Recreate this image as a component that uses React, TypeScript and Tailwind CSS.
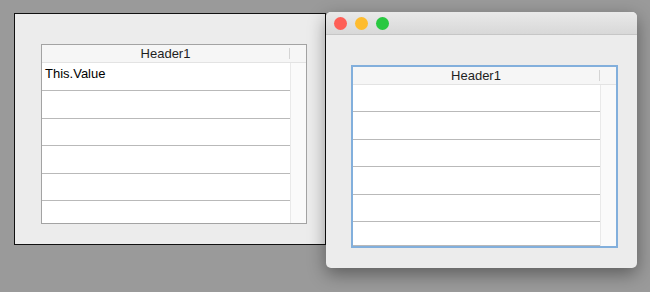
import React from 'react';

interface TableProps {
  rows: string[];
  rowHeights: number[];
  focused?: boolean;
}

function Table({ rows, rowHeights, focused }: TableProps) {
  return (
    <div
      className={
        focused
          ? 'flex h-full w-full flex-col bg-white border-2 border-[#82afdc]'
          : 'flex h-full w-full flex-col bg-white border border-[#a3a3a3]'
      }
    >
      <div className="flex h-[18px] shrink-0 items-center border-b border-[#e3e3e3] bg-[#f6f6f6]">
        <div className="flex-1 text-center text-[13px] leading-[16px] text-[#1e1e1e]">Header1</div>
        <div className="h-[11px] w-px bg-[#d4d4d4]" />
        <div className="w-[16px]" />
      </div>
      <div className="flex min-h-0 flex-1">
        <div className="flex flex-1 flex-col overflow-hidden">
          {rowHeights.map((h, i) => (
            <div
              key={i}
              className="shrink-0 border-b border-[#b9b9b9] pl-[3px] pt-[3px] text-[13px] leading-[16px] text-black"
              style={{ height: h }}
            >
              {rows[i] ?? ''}
            </div>
          ))}
        </div>
        <div className="w-[16px] border-l border-[#e9e9e9] bg-[#fafafa]" />
      </div>
    </div>
  );
}

export default function App() {
  return (
    <div className="relative h-[292px] w-[650px] overflow-hidden bg-[#9a9a9a] font-['Liberation_Sans',Arial,sans-serif]">
      {/* back window */}
      <div className="absolute left-[14px] top-[13px] h-[232px] w-[312px] border border-[#111] bg-[#ececec]">
        <div className="ml-[26px] mt-[30px] h-[180px] w-[266px]">
          <Table rows={['This.Value']} rowHeights={[28, 28, 27, 28, 27, 24]} />
        </div>
      </div>

      {/* front window */}
      <div className="absolute left-[326px] top-[12px] flex h-[256px] w-[311px] flex-col overflow-hidden rounded-[5px] bg-[#ececec] shadow-[0_6px_18px_rgba(0,0,0,0.4)]">
        <div className="flex h-[23px] shrink-0 items-center gap-[8px] border-b border-[#c6c6c6] bg-gradient-to-b from-[#e9e9e9] to-[#d8d8d8] pl-[8px]">
          <span className="h-[13px] w-[13px] rounded-full bg-[#fe5f57]" />
          <span className="h-[13px] w-[13px] rounded-full bg-[#febc2e]" />
          <span className="h-[13px] w-[13px] rounded-full bg-[#28c840]" />
        </div>
        <div className="ml-[25px] mt-[30px] h-[183px] w-[267px]">
          <Table focused rows={[]} rowHeights={[27, 28, 27, 28, 27, 24]} />
        </div>
      </div>
    </div>
  );
}
